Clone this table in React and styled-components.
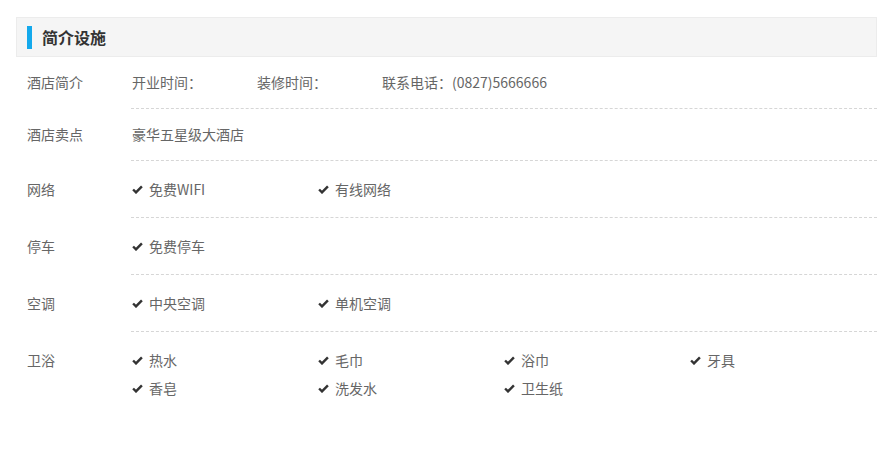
import React from "react";
import styled, { createGlobalStyle } from "styled-components";

const Global = createGlobalStyle`
  html, body { margin: 0; padding: 0; background: #fff; }
  body { font-family: "Noto Sans CJK SC", "Noto Sans", sans-serif; font-size: 14px; color: #666; }
`;

const Page = styled.div`
  padding: 17px 13px 0 16px;
`;

const Header = styled.div`
  height: 38px;
  border: 1px solid #ececec;
  background: #f5f5f5;
  display: flex;
  align-items: center;
  padding-left: 10px;
  gap: 10px;
`;

const Bar = styled.span`
  width: 5px;
  height: 23px;
  background: #14a9ec;
`;

const Title = styled.h2`
  margin: 0;
  font-size: 16px;
  font-weight: 700;
  color: #333;
  line-height: 22px;
`;

const Row = styled.div`
  display: flex;
  line-height: ${(p) => p.$lh}px;
  --pb: ${(p) => (p.$lh > 22 ? "14px" : "15px")};
`;

const Label = styled.div`
  width: 104px;
  padding: 14px 0 var(--pb) 11px;
  color: #666;
  flex: none;
`;

const Content = styled.div`
  flex: 1;
  padding: 14px 0 var(--pb) 1px;
  border-bottom: ${(p) => (p.$last ? "1px solid transparent" : "1px dashed #d6d6d6")};
`;

const Field = styled.span`
  display: inline-block;
  width: ${(p) => (p.$w ? `${p.$w}px` : "auto")};
`;

const Grid = styled.div`
  display: grid;
  grid-template-columns: repeat(4, 186px);
`;

const Item = styled.div`
  display: flex;
  align-items: center;
  gap: 6px;
  color: #666;
`;

const Check = () => (
  <svg width="11" height="9" viewBox="0 0 11 9" aria-hidden="true">
    <path d="M1.1 4.5 L4 7.4 L9.9 1.3" fill="none" stroke="#333" strokeWidth="2.4" strokeLinejoin="miter" />
  </svg>
);

const rows = [
  { label: "网络", items: ["免费WIFI", "有线网络"] },
  { label: "停车", items: ["免费停车"] },
  { label: "空调", items: ["中央空调", "单机空调"] },
  { label: "卫浴", items: ["热水", "毛巾", "浴巾", "牙具", "香皂", "洗发水", "卫生纸"] },
];

export default function App() {
  return (
    <>
      <Global />
      <Page>
        <Header>
          <Bar />
          <Title>简介设施</Title>
        </Header>
        <Row $lh={22}>
          <Label>酒店简介</Label>
          <Content>
            <Field $w={125}>开业时间：</Field>
            <Field $w={125}>装修时间：</Field>
            <Field>联系电话：(0827)5666666</Field>
          </Content>
        </Row>
        <Row $lh={22}>
          <Label>酒店卖点</Label>
          <Content>豪华五星级大酒店</Content>
        </Row>
        {rows.map((r, i) => (
          <Row $lh={28} key={r.label}>
            <Label>{r.label}</Label>
            <Content $last={i === rows.length - 1}>
              <Grid>
                {r.items.map((it) => (
                  <Item key={it}>
                    <Check />
                    {it}
                  </Item>
                ))}
              </Grid>
            </Content>
          </Row>
        ))}
      </Page>
    </>
  );
}
